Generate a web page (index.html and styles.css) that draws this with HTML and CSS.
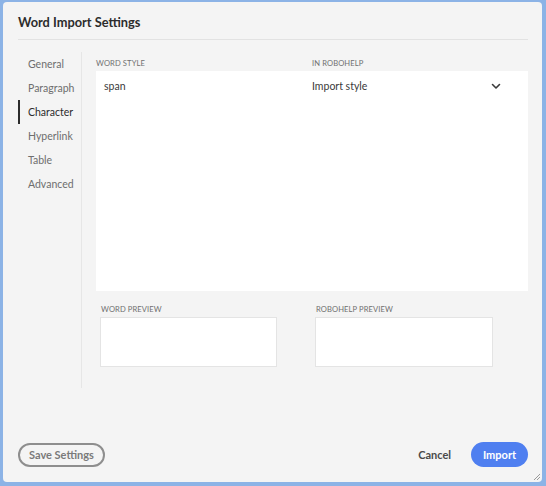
FILE: index.html
```html
<!DOCTYPE html>
<html>
<head>
<meta charset="utf-8">
<link rel="stylesheet" href="styles.css">
</head>
<body>
<div class="dialog">
  <div class="header"><h1 class="title">Word Import Settings</h1></div>
  <div class="body">
    <nav class="nav">
      <div class="nav-item">General</div>
      <div class="nav-item">Paragraph</div>
      <div class="nav-item active">Character</div>
      <div class="nav-item">Hyperlink</div>
      <div class="nav-item">Table</div>
      <div class="nav-item">Advanced</div>
    </nav>
    <div class="content">
      <div class="table-head">
        <div class="label">WORD STYLE</div>
        <div class="label">IN ROBOHELP</div>
      </div>
      <div class="table">
        <div class="row">
          <div class="cell first">span</div>
          <div class="cell second">Import style
            <svg class="chev" width="10" height="7" viewBox="0 0 10 7"><path d="M1.5 1.5 L5 5 L8.5 1.5" fill="none" stroke="#3a3a3a" stroke-width="1.6" stroke-linecap="round" stroke-linejoin="round"/></svg>
          </div>
        </div>
      </div>
      <div class="previews">
        <div class="preview">
          <div class="label plabel">WORD PREVIEW</div>
          <div class="pbox"></div>
        </div>
        <div class="preview">
          <div class="label plabel">ROBOHELP PREVIEW</div>
          <div class="pbox"></div>
        </div>
      </div>
    </div>
  </div>
  <div class="footer">
    <button class="btn-outline">Save Settings</button>
    <div class="actions">
      <button class="btn-text">Cancel</button>
      <button class="btn-primary">Import</button>
    </div>
  </div>
  <svg class="grip" width="8" height="8" viewBox="0 0 8 8"><path d="M7 1 L1 7 M7 4 L4 7" stroke="#9a9a9a" stroke-width="1"/></svg>
</div>
</body>
</html>
```
FILE: styles.css
```css
* { box-sizing: border-box; }
html, body { margin: 0; padding: 0; }
body {
  background: #8cb3e6;
  width: 546px;
  height: 486px;
  padding: 2px 4px 4px 3px;
  font-family: Lato, "Open Sans", sans-serif;
}
.dialog {
  position: relative;
  background: #f4f4f4;
  border-radius: 4px;
  height: 480px;
  display: flex;
  flex-direction: column;
}
.header {
  margin: 0 14px 0 15px;
  height: 38px;
  border-bottom: 1px solid #e2e2e2;
  display: flex;
  align-items: center;
}
.title {
  margin: 0;
  font-size: 12.8px;
  font-weight: 700;
  color: #2c2c2c;
  padding-top: 2px;
}
.body {
  display: flex;
  margin-left: 15px;
  margin-right: 14px;
}
.nav {
  width: 64px;
  margin-top: 12px;
  height: 336px;
  border-right: 1px solid #e6e6e6;
}
.nav-item {
  height: 24px;
  line-height: 24px;
  font-size: 10.5px;
  color: #6e6e6e;
  padding-left: 8px;
  border-left: 2px solid transparent;
}
.nav-item.active {
  color: #2c2c2c;
  border-left-color: #2c2c2c;
}
.content {
  flex: 1;
  margin-left: 14px;
  padding-top: 12px;
}
.table-head {
  display: grid;
  grid-template-columns: 1fr 1fr;
  align-items: end;
  height: 19px;
  padding-bottom: 3px;
}
.label {
  font-size: 7.6px;
  color: #707070;
  letter-spacing: 0.1px;
}
.table {
  background: #fff;
  height: 220px;
}
.row {
  display: grid;
  grid-template-columns: 1fr 1fr;
  height: 30px;
  align-items: center;
}
.cell {
  font-size: 10.5px;
  color: #3a3a3a;
}
.cell.first { padding-left: 8px; }
.cell.second {
  display: flex;
  align-items: center;
  justify-content: space-between;
  padding-right: 27px;
}
.chev { display: block; }
.previews {
  display: flex;
  gap: 38px;
  padding-left: 4px;
  margin-top: 11px;
}
.preview { width: 177px; }
.preview + .preview { width: 178px; }
.plabel {
  padding-left: 1px;
  height: 15px;
  padding-top: 2px;
}
.pbox {
  height: 50px;
  background: #fff;
  border: 1px solid #e4e4e4;
}
.footer {
  margin-top: auto;
  margin-left: 15px;
  margin-right: 14px;
  margin-bottom: 15px;
  display: flex;
  align-items: center;
  justify-content: space-between;
}
button {
  font-family: Lato, "Open Sans", sans-serif;
  font-weight: 700;
  font-size: 11px;
  cursor: pointer;
}
.btn-outline {
  height: 24px;
  padding: 0 9px;
  border: 2px solid #8e8e8e;
  border-radius: 12px;
  background: transparent;
  color: #7a7a7a;
}
.actions {
  display: flex;
  align-items: center;
  gap: 20px;
}
.btn-text {
  background: none;
  border: none;
  padding: 0;
  color: #4a4a4a;
}
.btn-primary {
  height: 25px;
  width: 57px;
  border: none;
  border-radius: 13px;
  background: #4f7ff0;
  color: #fff;
}
.grip {
  position: absolute;
  right: 1px;
  bottom: 1px;
}
```
